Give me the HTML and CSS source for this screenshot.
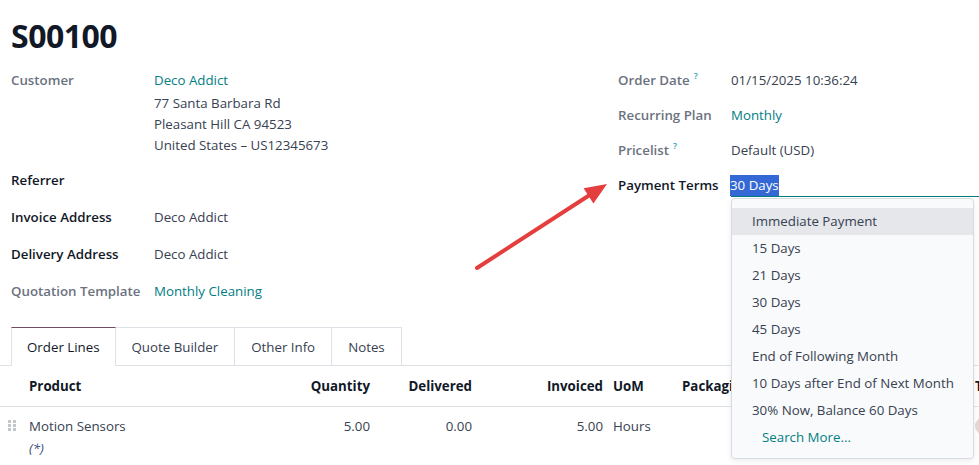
FILE: index.html
```html
<!DOCTYPE html>
<html lang="en">
  <head>
    <meta charset="UTF-8" />
    <meta name="viewport" content="width=device-width, initial-scale=1.0" />
    <title>S00100</title>
    <link rel="stylesheet" href="styles.css">
  </head>
  <body>
    <div class="sheet">
      <h1 class="title">S00100</h1>

      <div class="form">
        <div class="group">
          <div class="field field-customer">
            <span class="label">Customer</span>
            <div class="value">
              <a class="link" href="#">Deco Addict</a>
              <div class="address">
                <div>77 Santa Barbara Rd</div>
                <div>Pleasant Hill CA 94523</div>
                <div>United States – US12345673</div>
              </div>
            </div>
          </div>
          <div class="field">
            <span class="label required">Referrer</span>
            <div class="value"></div>
          </div>
          <div class="field">
            <span class="label required">Invoice Address</span>
            <div class="value">Deco Addict</div>
          </div>
          <div class="field">
            <span class="label required">Delivery Address</span>
            <div class="value">Deco Addict</div>
          </div>
          <div class="field">
            <span class="label">Quotation Template</span>
            <div class="value"><a class="link" href="#">Monthly Cleaning</a></div>
          </div>
        </div>

        <div class="group group-right">
          <div class="field">
            <span class="label">Order Date<sup class="help">?</sup></span>
            <div class="value">01/15/2025 10:36:24</div>
          </div>
          <div class="field">
            <span class="label">Recurring Plan</span>
            <div class="value"><a class="link" href="#">Monthly</a></div>
          </div>
          <div class="field">
            <span class="label">Pricelist<sup class="help">?</sup></span>
            <div class="value">Default (USD)</div>
          </div>
          <div class="field">
            <span class="label required">Payment Terms</span>
            <div class="value input">
              <span class="selected">30 Days</span>
              <ul class="dropdown">
                <li class="active">Immediate Payment</li>
                <li>15 Days</li>
                <li>21 Days</li>
                <li>30 Days</li>
                <li>45 Days</li>
                <li>End of Following Month</li>
                <li>10 Days after End of Next Month</li>
                <li>30% Now, Balance 60 Days</li>
                <li class="search-more">Search More...</li>
              </ul>
            </div>
          </div>
        </div>
      </div>
    </div>

    <div class="notebook">
      <div class="tabs">
        <a class="tab active" href="#">Order Lines</a>
        <a class="tab" href="#">Quote Builder</a>
        <a class="tab" href="#">Other Info</a>
        <a class="tab" href="#">Notes</a>
      </div>

      <div class="lines">
        <div class="row head">
          <div class="cell"></div>
          <div class="cell">Product</div>
          <div class="cell num">Quantity</div>
          <div class="cell num">Delivered</div>
          <div class="cell num">Invoiced</div>
          <div class="cell">UoM</div>
          <div class="cell">Packaging</div>
          <div class="cell">Taxes</div>
        </div>
        <div class="row">
          <div class="cell handle">
            <svg width="8" height="11" viewBox="0 0 8 11">
              <rect x="0" y="0" width="3" height="3" />
              <rect x="5" y="0" width="3" height="3" />
              <rect x="0" y="4" width="3" height="3" />
              <rect x="5" y="4" width="3" height="3" />
              <rect x="0" y="8" width="3" height="3" />
              <rect x="5" y="8" width="3" height="3" />
            </svg>
          </div>
          <div class="cell">
            <div>Motion Sensors</div>
            <div class="note">(*)</div>
          </div>
          <div class="cell num">5.00</div>
          <div class="cell num">0.00</div>
          <div class="cell num">5.00</div>
          <div class="cell">Hours</div>
          <div class="cell"></div>
          <div class="cell"><span class="tag"></span></div>
        </div>
      </div>
    </div>

    <!-- red pointer toward the payment terms field -->
    <svg class="pointer" width="150" height="100" viewBox="470 175 150 100">
      <line x1="477" y1="268" x2="592" y2="193.5" />
      <polygon points="607,184 593.4,203.5 583.6,188.3" />
    </svg>
  </body>
</html>
```
FILE: styles.css
```css
:root {
  --text: #374151;
  --dark: #111827;
  --muted: #6b7280;
  --link: #017e84;
  --border: #dee2e6;
}

body {
  margin: 0;
  font-family: "Open Sans", sans-serif;
  font-size: 13.3px;
  line-height: 22px;
  color: var(--text);
  background: #fff;
  overflow: hidden;
  position: relative;
  height: 100vh;
}

.sheet {
  padding-left: 11px;
}

.title {
  margin: 17px 0 0;
  font-size: 32px;
  line-height: 38px;
  font-weight: 700;
  letter-spacing: -0.5px;
  color: var(--dark);
}

.form {
  display: flex;
  margin-top: 14px;
}

.group {
  display: flex;
  flex-direction: column;
  gap: 15px;
  width: 607px;
}

.group-right {
  flex: 1;
  gap: 13px;
}

.field {
  display: flex;
  min-height: 22px;
}

.field-customer {
  margin-bottom: -2px;
}

.label {
  width: 143px;
  flex-shrink: 0;
  font-weight: 600;
  color: var(--muted);
}

.group-right .label {
  width: 113px;
}

.label.required {
  color: var(--dark);
}

.help {
  font-size: 9px;
  font-weight: 600;
  color: #27a4b4;
  margin-left: 4px;
  vertical-align: 6px;
  line-height: 0;
}

.value {
  flex: 1;
}

.link {
  color: var(--link);
  text-decoration: none;
}

.address {
  margin-top: 2px;
  line-height: 21px;
}

.input {
  position: relative;
  border-bottom: 1px solid var(--link);
}

.selected {
  background: #3468d5;
  color: #fff;
  padding: 1px 0 2px;
  margin-left: -1px;
}

.dropdown {
  position: absolute;
  top: calc(100% + 2px);
  left: 0;
  width: 243px;
  box-sizing: border-box;
  margin: 0;
  padding: 9px 0 7px;
  list-style: none;
  background: #f9fafb;
  border: 1px solid #d8dbe0;
  border-radius: 4px;
  box-shadow: 0 2px 6px rgba(0, 0, 0, 0.08);
  z-index: 2;
}

.dropdown li {
  height: 27px;
  line-height: 27px;
  padding-left: 20px;
  white-space: nowrap;
}

.dropdown li.active {
  background: #e5e7eb;
}

.dropdown .search-more {
  padding-left: 30px;
  color: var(--link);
}

.notebook {
  margin-top: 25px;
}

.tabs {
  display: flex;
  padding-left: 11px;
  border-bottom: 1px solid var(--border);
}

.tab {
  padding: 8px 16px 7px;
  border: 1px solid var(--border);
  border-bottom: none;
  border-left: none;
  color: var(--text);
  text-decoration: none;
}

.tab.active {
  padding: 8px 15px;
  border-left: 1px solid var(--border);
  border-top-color: #714b67;
  margin-bottom: -1px;
  background: #fff;
  color: var(--dark);
}

.row {
  display: grid;
  grid-template-columns: 24px 251px 100px 102px 131px 69px 293px 1fr;
  border-bottom: 1px solid var(--border);
  white-space: nowrap;
}

.row.head {
  font-weight: 700;
  color: var(--dark);
}

.row.head .cell {
  padding-top: 9px;
  padding-bottom: 9px;
}

.cell {
  padding: 8px 5px 12px;
}

.cell.num {
  text-align: right;
}

.handle {
  padding: 13px 0 0 8px;
}

.handle svg {
  display: block;
}

.handle rect {
  fill: #c3c7cc;
}

.note {
  font-style: italic;
  color: #3b4a7a;
}

.tag {
  display: inline-block;
  width: 18px;
  height: 18px;
  border-radius: 50%;
  background: #e4dbd8;
  margin-top: 2px;
}

.pointer {
  position: absolute;
  left: 470px;
  top: 175px;
  z-index: 3;
}

.pointer line {
  stroke: #e53e3e;
  stroke-width: 4;
  stroke-linecap: round;
}

.pointer polygon {
  fill: #e53e3e;
}
```
